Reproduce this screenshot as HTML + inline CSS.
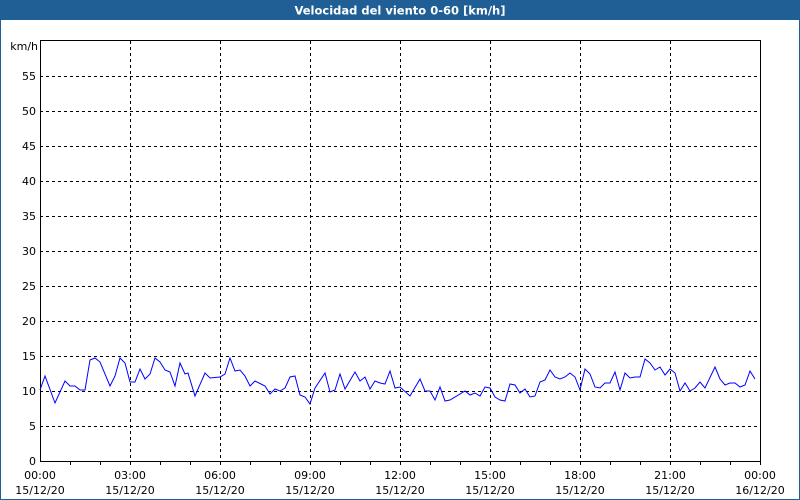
<!DOCTYPE html>
<html><head><meta charset="utf-8"><style>
html,body{margin:0;padding:0;background:#fff;}
svg{display:block;}
text{font-family:"DejaVu Sans","Liberation Sans",sans-serif;font-size:11px;fill:#000;}
</style></head><body>
<svg width="800" height="500" viewBox="0 0 800 500" xmlns="http://www.w3.org/2000/svg" shape-rendering="crispEdges">
<rect x="0" y="0" width="800" height="500" fill="#fff"/>
<rect x="0" y="0" width="800" height="20" fill="#1f5f96"/>
<rect x="0" y="0" width="1" height="500" fill="#1f5f96"/>
<rect x="799" y="0" width="1" height="500" fill="#1f5f96"/>
<rect x="0" y="499" width="800" height="1" fill="#1f5f96"/>
<text x="400" y="14.5" text-anchor="middle" style="fill:#fff;font-weight:bold;font-size:11.5px">Velocidad del viento 0-60 [km/h]</text>
<g stroke="#000" stroke-width="1" stroke-dasharray="3,3">
<line x1="40" y1="76.5" x2="760" y2="76.5"/><line x1="40" y1="111.5" x2="760" y2="111.5"/><line x1="40" y1="146.5" x2="760" y2="146.5"/><line x1="40" y1="181.5" x2="760" y2="181.5"/><line x1="40" y1="216.5" x2="760" y2="216.5"/><line x1="40" y1="251.5" x2="760" y2="251.5"/><line x1="40" y1="286.5" x2="760" y2="286.5"/><line x1="40" y1="321.5" x2="760" y2="321.5"/><line x1="40" y1="356.5" x2="760" y2="356.5"/><line x1="40" y1="391.5" x2="760" y2="391.5"/><line x1="40" y1="426.5" x2="760" y2="426.5"/>
<line x1="130.5" y1="41" x2="130.5" y2="461"/><line x1="220.5" y1="41" x2="220.5" y2="461"/><line x1="310.5" y1="41" x2="310.5" y2="461"/><line x1="400.5" y1="41" x2="400.5" y2="461"/><line x1="490.5" y1="41" x2="490.5" y2="461"/><line x1="580.5" y1="41" x2="580.5" y2="461"/><line x1="670.5" y1="41" x2="670.5" y2="461"/>
</g>
<rect x="40.5" y="40.5" width="720" height="421" fill="none" stroke="#000"/>
<g stroke="#000">
<path d="M70.5 461v4M100.5 461v4M130.5 461v4M160.5 461v4M190.5 461v4M220.5 461v4M250.5 461v4M280.5 461v4M310.5 461v4M340.5 461v4M370.5 461v4M400.5 461v4M430.5 461v4M460.5 461v4M490.5 461v4M520.5 461v4M550.5 461v4M580.5 461v4M610.5 461v4M640.5 461v4M670.5 461v4M700.5 461v4M730.5 461v4M760.5 461v4"/>
</g>
<g text-anchor="end">
<text x="38" y="50">km/h</text>
<text x="36" y="80">55</text><text x="36" y="115">50</text><text x="36" y="150">45</text><text x="36" y="185">40</text><text x="36" y="220">35</text><text x="36" y="255">30</text><text x="36" y="290">25</text><text x="36" y="325">20</text><text x="36" y="360">15</text><text x="36" y="395">10</text><text x="36" y="430">5</text><text x="36" y="465">0</text>
</g>
<g text-anchor="middle">
<text x="40" y="479">00:00</text><text x="40" y="494">15/12/20</text>
<text x="130" y="479">03:00</text><text x="130" y="494">15/12/20</text>
<text x="220" y="479">06:00</text><text x="220" y="494">15/12/20</text>
<text x="310" y="479">09:00</text><text x="310" y="494">15/12/20</text>
<text x="400" y="479">12:00</text><text x="400" y="494">15/12/20</text>
<text x="490" y="479">15:00</text><text x="490" y="494">15/12/20</text>
<text x="580" y="479">18:00</text><text x="580" y="494">15/12/20</text>
<text x="670" y="479">21:00</text><text x="670" y="494">15/12/20</text>
<text x="760" y="479">00:00</text><text x="760" y="494">16/12/20</text>
</g>
<polyline fill="none" stroke="#0000ff" stroke-width="1" shape-rendering="auto" points="40,390 45,376 55,403 65,381 70,386 75,386 80,390 85,390 90,360 95,358 100,362 110,386 115,376 120,358 125,363 130,382 135,382 140,369 145,379 150,374 155,358 160,362 165,370 170,372 175,386 180,363 185,374 188,373 195,396 205,373 210,378 220,377 225,374 230,358 235,371 240,370 245,376 250,386 255,381 265,386 270,394 275,389 280,391 285,388 290,377 295,376 300,395 305,397 310,404 315,388 325,373 330,392 335,390 340,374 345,389 355,372 360,381 365,377 370,389 375,381 380,383 385,384 390,371 395,388 400,387 410,396 420,379 425,391 430,391 435,400 440,387 445,401 450,400 465,391 470,395 475,393 480,396 485,387 490,388 495,397 500,400 505,401 510,384 515,385 520,393 525,389 530,397 535,396 540,382 545,380 550,370 555,377 560,379 565,377 570,373 575,377 580,390 585,369 590,374 595,387 600,388 605,383 610,383 615,372 620,390 625,373 630,378 635,377 640,377 645,359 650,363 655,370 660,367 665,375 670,369 675,373 680,391 685,383 690,391 695,388 700,382 705,388 715,367 720,379 725,385 730,383 735,383 740,387 745,385 750,371 755,379"/>
</svg>
</body></html>
